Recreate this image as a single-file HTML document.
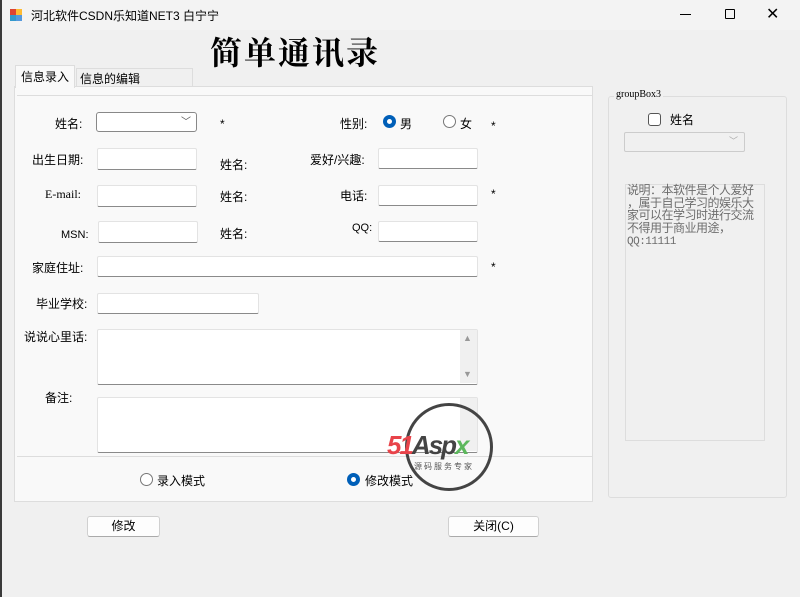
<!DOCTYPE html>
<html><head><meta charset="utf-8"><style>
*{margin:0;padding:0;box-sizing:border-box}
body{width:800px;height:597px;overflow:hidden;background:#f0f0f0;font-family:"Liberation Sans","Noto Sans CJK SC",sans-serif;font-size:12px;color:#000;position:relative}
.a{position:absolute;white-space:nowrap}
.in{position:absolute;background:#fff;border:1px solid #e3e3e3;border-bottom:1px solid #8a8a8a;border-radius:2px}
.lb{position:absolute;font-size:12px;white-space:nowrap}
.rad{position:absolute;width:13px;height:13px;border-radius:50%;border:1px solid #777;background:#fff}
.rad.on{border:4px solid #005fb8}
.btn{position:absolute;background:#fdfdfd;border:1px solid #d0d0d0;border-bottom-color:#aaa;border-radius:3px;text-align:center;line-height:18px}
</style></head><body>
<div class="a" style="left:0;top:0;width:800px;height:30px;background:#f3f3f3"></div>
<div class="a" style="left:0;top:0;width:2px;height:597px;background:#3a3a3a"></div>
<div class="a" style="left:10px;top:9px;width:6px;height:6px;background:#d43"></div>
<div class="a" style="left:16px;top:9px;width:6px;height:6px;background:#fb3"></div>
<div class="a" style="left:10px;top:15px;width:6px;height:6px;background:#39c"></div>
<div class="a" style="left:16px;top:15px;width:6px;height:6px;background:#59d"></div>
<div class="a" style="left:31px;top:7px;font-size:12px">河北软件CSDN乐知道NET3 白宁宁</div>
<div class="a" style="left:680px;top:14px;width:11px;height:1px;background:#000"></div>
<div class="a" style="left:725px;top:9px;width:10px;height:10px;border:1px solid #000;border-radius:1px"></div>
<div class="a" style="left:766px;top:4px;font-size:16px;font-weight:300">✕</div>
<div class="a" style="left:210px;top:28px;font-size:32px;letter-spacing:2px;font-family:'Noto Serif CJK SC',serif;font-weight:bold">简单通讯录</div>
<div class="a" style="left:76px;top:68px;width:117px;height:19px;border:1px solid #ddd;border-bottom:none;background:#f0f0f0"></div>
<div class="a" style="left:80px;top:70px">信息的编辑</div>
<div class="a" style="left:14px;top:86px;width:579px;height:416px;background:#f9f9f9;border:1px solid #ddd"></div>
<div class="a" style="left:15px;top:65px;width:60px;height:23px;background:#f9f9f9;border:1px solid #ddd;border-bottom:none"></div>
<div class="a" style="left:21px;top:68px">信息录入</div>
<div class="a" style="left:17px;top:95px;width:575px;height:362px;border-top:1px solid #ddd;border-bottom:1px solid #ddd"></div>
<div class="lb" style="left:55px;top:115px">姓名:</div>
<div class="in" style="left:96px;top:112px;width:101px;height:20px;border:1px solid #888;border-radius:3px"></div>
<div class="a" style="left:181px;top:113px;font-size:10px;color:#555">﹀</div>
<div class="lb" style="left:220px;top:117px">*</div>
<div class="lb" style="left:340px;top:115px">性别:</div>
<div class="rad on" style="left:383px;top:115px"></div><div class="lb" style="left:400px;top:115px">男</div>
<div class="rad" style="left:443px;top:115px"></div><div class="lb" style="left:460px;top:115px">女</div>
<div class="lb" style="left:491px;top:119px">*</div>
<div class="lb" style="left:32px;top:151px">出生日期:</div>
<div class="in" style="left:97px;top:148px;width:100px;height:22px"></div>
<div class="lb" style="left:220px;top:156px">姓名:</div>
<div class="lb" style="left:310px;top:151px">爱好/兴趣:</div>
<div class="in" style="left:378px;top:148px;width:100px;height:21px"></div>
<div class="lb" style="left:45px;top:187px;font-family:'Liberation Serif',serif">E-mail:</div>
<div class="in" style="left:97px;top:185px;width:100px;height:22px"></div>
<div class="lb" style="left:220px;top:188px">姓名:</div>
<div class="lb" style="left:340px;top:187px">电话:</div>
<div class="in" style="left:378px;top:185px;width:100px;height:21px"></div>
<div class="lb" style="left:491px;top:187px">*</div>
<div class="lb" style="left:61px;top:229px;font-size:11px">MSN:</div>
<div class="in" style="left:98px;top:221px;width:100px;height:22px"></div>
<div class="lb" style="left:220px;top:225px">姓名:</div>
<div class="lb" style="left:352px;top:222px;font-size:11px">QQ:</div>
<div class="in" style="left:378px;top:221px;width:100px;height:21px"></div>
<div class="lb" style="left:32px;top:259px">家庭住址:</div>
<div class="in" style="left:97px;top:256px;width:381px;height:21px"></div>
<div class="lb" style="left:491px;top:260px">*</div>
<div class="lb" style="left:36px;top:295px">毕业学校:</div>
<div class="in" style="left:97px;top:293px;width:162px;height:21px"></div>
<div class="lb" style="left:24px;top:328px">说说心里话:</div>
<div class="in" style="left:97px;top:329px;width:381px;height:56px"></div>
<div class="a" style="left:460px;top:330px;width:17px;height:53px;background:#f0f0f0"></div>
<div class="a" style="left:463px;top:333px;font-size:9px;color:#999">▲</div>
<div class="a" style="left:463px;top:369px;font-size:9px;color:#999">▼</div>
<div class="lb" style="left:45px;top:389px">备注:</div>
<div class="in" style="left:97px;top:397px;width:381px;height:56px"></div>
<div class="a" style="left:460px;top:398px;width:17px;height:53px;background:#f0f0f0"></div>
<div class="rad" style="left:140px;top:473px"></div><div class="lb" style="left:157px;top:472px">录入模式</div>
<div class="rad on" style="left:347px;top:473px"></div><div class="lb" style="left:365px;top:472px">修改模式</div>
<div class="a" style="left:405px;top:403px;width:88px;height:88px;border:3px solid #444;border-radius:50%"></div>
<div class="a" style="left:387px;top:430px;font-size:26px;font-weight:bold;font-style:italic;color:#e8434a;letter-spacing:-2px">51<span style="color:#444">Asp</span><span style="color:#5cb85c">x</span></div>
<div class="a" style="left:414px;top:461px;font-size:8px;color:#555;letter-spacing:2px">源码服务专家</div>
<div class="btn" style="left:87px;top:516px;width:73px;height:21px">修改</div>
<div class="btn" style="left:448px;top:516px;width:91px;height:21px">关闭(C)</div>
<div class="a" style="left:608px;top:96px;width:179px;height:402px;border:1px solid #ddd;border-radius:3px"></div>
<div class="a" style="left:614px;top:89px;font-size:10px;background:#f0f0f0;padding:0 2px;font-family:'Liberation Serif',serif">groupBox3</div>
<div class="a" style="left:648px;top:113px;width:13px;height:13px;border:1px solid #555;border-radius:3px;background:#fff"></div>
<div class="lb" style="left:670px;top:111px">姓名</div>
<div class="a" style="left:624px;top:132px;width:121px;height:20px;border:1px solid #ccc;background:#f0f0f0;border-radius:2px"></div>
<div class="a" style="left:729px;top:134px;font-size:9px;color:#aaa">﹀</div>
<div class="a" style="left:625px;top:184px;width:140px;height:257px;border:1px solid #ddd;background:#f0f0f0"></div>
<div class="a" style="left:627px;top:184px;font-size:12px;line-height:12.5px;color:#6d6d6d;letter-spacing:-0.5px">说明：本软件是个人爱好<br>，属于自己学习的娱乐大<br>家可以在学习时进行交流<br>不得用于商业用途，<br><span style="font-family:'Liberation Mono',monospace;font-size:11px">QQ:11111</span></div>
</body></html>
